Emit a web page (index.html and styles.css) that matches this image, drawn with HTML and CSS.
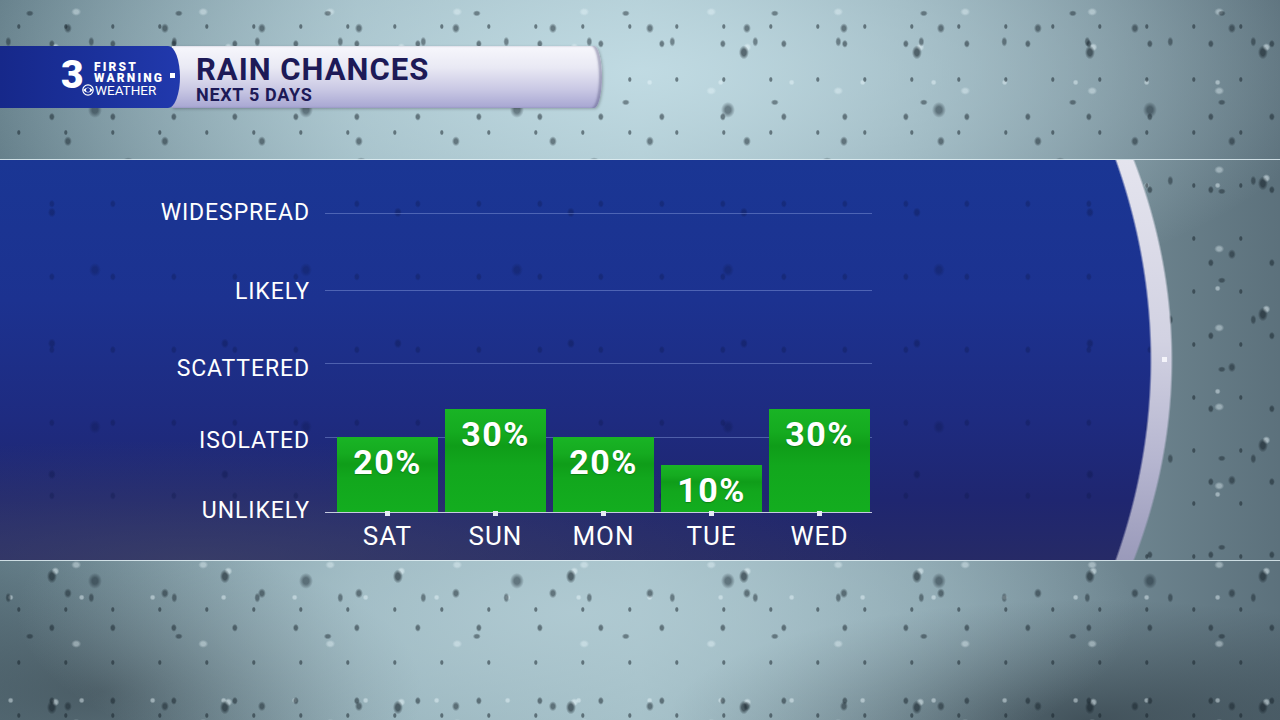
FILE: index.html
```html
<!DOCTYPE html>
<html lang="en">
<head>
<meta charset="utf-8">
<title>Rain Chances</title>
<link rel="stylesheet" href="styles.css">
</head>
<body>
<div class="screen">
  <header class="header">
    <div class="logo">
      <span class="logo-3">3</span>
      <div class="logo-words">
        <span class="lw-first">FIRST</span>
        <span class="lw-warning">WARNING</span>
        <span class="lw-weather"><svg class="eye" viewBox="-6 -6 12 12" width="12" height="12"><circle r="5.2" fill="none" stroke="#fff" stroke-width="1.2"/><path d="M-5 0 Q0 -5.2 5 0 Q0 5.2 -5 0 Z" fill="#fff"/><circle r="2.1" fill="#1c319c"/></svg>WEATHER</span>
      </div>
      <span class="logo-dot"></span>
    </div>
    <div class="titlebar">
      <div class="title">RAIN CHANCES</div>
      <div class="subtitle">NEXT 5 DAYS</div>
    </div>
  </header>

  <section class="panel">
    <span class="rim-dot"></span>
    <div class="chart">
      <div class="labels">
        <span class="level-label">WIDESPREAD</span>
        <span class="level-label">LIKELY</span>
        <span class="level-label">SCATTERED</span>
        <span class="level-label">ISOLATED</span>
        <span class="level-label">UNLIKELY</span>
      </div>
      <div class="lines">
        <span class="line"></span>
        <span class="line"></span>
        <span class="line"></span>
        <span class="line"></span>
        <span class="line baseline"></span>
      </div>
      <div class="bars">
        <div class="bar" style="height:75px">20%</div>
        <div class="bar" style="height:103px">30%</div>
        <div class="bar" style="height:75px">20%</div>
        <div class="bar" style="height:47px">10%</div>
        <div class="bar" style="height:103px">30%</div>
      </div>
      <div class="days">
        <div class="day"><span class="tick"></span><span class="day-label">SAT</span></div>
        <div class="day"><span class="tick"></span><span class="day-label">SUN</span></div>
        <div class="day"><span class="tick"></span><span class="day-label">MON</span></div>
        <div class="day"><span class="tick"></span><span class="day-label">TUE</span></div>
        <div class="day"><span class="tick"></span><span class="day-label">WED</span></div>
      </div>
    </div>
  </section>
</div>
</body>
</html>
```

FILE: styles.css
```css
* { box-sizing: border-box; }

html, body {
  margin: 0;
  width: 1280px;
  height: 720px;
  overflow: hidden;
}

body {
  font-family: Roboto, "Liberation Sans", sans-serif;
  color: #fff;
  background:
    /* rain drops: dark rims */
    radial-gradient(ellipse 5px 7px at 30% 40%, rgba(22,34,42,.6) 0 45%, transparent 100%) 0 0 / 173px 131px,
    radial-gradient(ellipse 4px 5px at 70% 25%, rgba(22,34,42,.5) 0 45%, transparent 100%) 0 0 / 97px 113px,
    radial-gradient(ellipse 7px 8px at 45% 70%, rgba(26,40,50,.5) 0 40%, transparent 100%) 0 0 / 211px 157px,
    radial-gradient(ellipse 3px 4px at 85% 60%, rgba(20,32,40,.5) 0 50%, transparent 100%) 0 0 / 61px 73px,
    radial-gradient(ellipse 4px 3px at 20% 15%, rgba(20,32,40,.45) 0 50%, transparent 100%) 0 0 / 149px 89px,
    radial-gradient(ellipse 6px 5px at 55% 85%, rgba(24,36,46,.5) 0 45%, transparent 100%) 0 0 / 233px 191px,
    radial-gradient(ellipse 2px 3px at 40% 50%, rgba(20,32,40,.5) 0 55%, transparent 100%) 0 0 / 47px 53px,
    radial-gradient(ellipse 3px 5px at 10% 30%, rgba(20,32,40,.45) 0 50%, transparent 100%) 0 0 / 83px 139px,
    /* rain drops: highlights */
    radial-gradient(ellipse 4px 4px at 32% 36%, rgba(235,248,252,.5) 0 45%, transparent 100%) 0 0 / 173px 131px,
    radial-gradient(ellipse 3px 3px at 15% 80%, rgba(235,248,252,.45) 0 45%, transparent 100%) 0 0 / 71px 103px,
    radial-gradient(ellipse 5px 4px at 60% 15%, rgba(235,248,252,.4) 0 45%, transparent 100%) 0 0 / 127px 79px,
    /* sky tones */
    radial-gradient(ellipse 700px 260px at 50% 10%, rgba(196,222,230,.9), transparent 100%),
    radial-gradient(ellipse 560px 190px at 45% 85%, rgba(178,204,212,.85), transparent 100%),
    radial-gradient(ellipse 420px 120px at 85% 100%, rgba(40,52,60,.65), transparent 100%),
    radial-gradient(ellipse 320px 150px at 8% 96%, rgba(48,60,68,.6), transparent 100%),
    linear-gradient(90deg, #647e89 0%, #93afb8 28%, #a0bcc4 50%, #859fa9 72%, #5c717c 100%);
}

.screen {
  display: flex;
  flex-direction: column;
  padding-top: 46px;
}

/* ---------- header ---------- */
.header {
  display: flex;
  height: 62px;
}

.logo {
  position: relative;
  z-index: 2;
  flex: 0 0 180px;
  display: flex;
  align-items: flex-start;
  padding: 11px 0 0 61px;
  background: linear-gradient(90deg, #16288a 0%, #1b319c 55%, #2139ad 100%);
  border-top-right-radius: 12px 31px;
  border-bottom-right-radius: 12px 31px;
}

.logo-3 {
  font-size: 39px;
  font-weight: 900;
  line-height: 36px;
  letter-spacing: -1px;
  width: 23px;
}

.logo-words {
  display: flex;
  flex-direction: column;
  margin-left: 10px;
  margin-top: 5px;
}

.lw-first,
.lw-warning {
  font-size: 12px;
  font-weight: 900;
  line-height: 10.5px;
  letter-spacing: 2.2px;
}

.lw-weather {
  display: flex;
  align-items: center;
  font-size: 13.5px;
  font-weight: 400;
  line-height: 12px;
  margin-top: 1px;
  margin-left: -12px;
}

.eye { margin-right: 1px; }

.logo-dot {
  position: absolute;
  left: 170px;
  top: 27px;
  width: 5px;
  height: 5px;
  background: #fff;
}

.titlebar {
  flex: 0 0 430px;
  margin-left: -8px;
  padding: 8px 0 0 24px;
  color: #1d1a57;
  background: linear-gradient(180deg, #f7f7fc 0%, #e9e9f4 35%, #c9c8e4 70%, #a7a6d2 100%);
  border-top-right-radius: 8px 31px;
  border-bottom-right-radius: 8px 31px;
  box-shadow: inset -3px 0 2px rgba(90, 90, 130, .45), 1px 1px 3px rgba(0, 0, 0, .25);
}

.title {
  font-size: 31px;
  font-weight: 700;
  line-height: 32px;
  letter-spacing: 1px;
}

.subtitle {
  font-size: 18px;
  font-weight: 700;
  line-height: 20px;
  letter-spacing: .7px;
  margin-top: -1px;
}

/* ---------- panel ---------- */
.panel {
  position: relative;
  margin-top: 51px;
  height: 402px;
  border-top: 1px solid rgba(225, 238, 243, .85);
  border-bottom: 1px solid rgba(225, 238, 243, .85);
}

.panel::before,
.panel::after {
  content: "";
  position: absolute;
  inset: 0;
  z-index: 0;
}

.panel::before {
  background: linear-gradient(180deg, #e4e4ee 0%, #d2d2e2 45%, #b6b6d0 75%, #9a9aba 100%);
  -webkit-mask-image: radial-gradient(ellipse 1173px 792px at 0% 50%, #000 99.8%, transparent 100%);
  mask-image: radial-gradient(ellipse 1173px 792px at 0% 50%, #000 99.8%, transparent 100%);
}

.panel::after {
  background:
    radial-gradient(ellipse 4px 5px at 30% 40%, rgba(10,20,70,.35) 0 45%, transparent 100%) 0 0 / 173px 131px,
    radial-gradient(ellipse 6px 7px at 45% 70%, rgba(10,20,70,.3) 0 40%, transparent 100%) 0 0 / 211px 157px,
    radial-gradient(ellipse 3px 4px at 85% 60%, rgba(10,20,70,.3) 0 50%, transparent 100%) 0 0 / 61px 73px,
    radial-gradient(ellipse 700px 120px at 15% 100%, rgba(70, 75, 105, .55), transparent 100%),
    linear-gradient(180deg, #1a3694 0%, #1c3290 35%, #1e2b80 65%, #1f2670 85%, #262a66 100%);
  -webkit-mask-image: radial-gradient(ellipse 1152px 817px at 0% 50%, #000 99.8%, transparent 100%);
  mask-image: radial-gradient(ellipse 1152px 817px at 0% 50%, #000 99.8%, transparent 100%);
}

.rim-dot {
  position: absolute;
  z-index: 2;
  left: 1162px;
  top: 197px;
  width: 5px;
  height: 5px;
  background: #f4f4fa;
}

.chart {
  position: relative;
  z-index: 1;
  display: grid;
  grid-template-columns: 325px 547px;
  grid-template-rows: 313px 48px;
  margin-top: 40px;
}

.labels {
  grid-column: 1;
  grid-row: 1;
  display: grid;
  grid-template-rows: 79px 76.5px 72.5px 70px 28px;
  width: 310px;
  margin-top: -1px;
}

.level-label {
  height: 28px;
  line-height: 28px;
  text-align: right;
  font-size: 23px;
  font-weight: 400;
  letter-spacing: .9px;
}

.lines {
  grid-column: 2;
  grid-row: 1;
  display: grid;
  grid-template-rows: 77px 73px 74px 75px 1px;
  padding-top: 13px;
}

.line {
  height: 1px;
  background: rgba(140, 160, 225, .45);
}

.line.baseline {
  background: rgba(225, 230, 245, .85);
}

.bars {
  grid-column: 2;
  grid-row: 1;
  display: flex;
  align-items: flex-end;
  gap: 7px;
  padding: 0 0 1px 12px;
}

.bar {
  width: 101px;
  padding-top: 7px;
  text-align: center;
  font-size: 34px;
  font-weight: 700;
  line-height: 36px;
  letter-spacing: 1.5px;
  background: linear-gradient(180deg, #19b425 0%, #15ab20 22%, #0f9d19 36%, #12a71d 55%, #13ad1f 100%);
  text-shadow: 0 1px 1px rgba(0, 60, 0, .35);
}

.days {
  grid-column: 2;
  grid-row: 2;
  display: flex;
  gap: 7px;
  padding-left: 12px;
}

.day {
  width: 101px;
  display: flex;
  flex-direction: column;
  align-items: center;
}

.tick {
  width: 5px;
  height: 5px;
  margin-top: -2px;
  background: #e6eaf4;
}

.day-label {
  margin-top: 6px;
  font-size: 26px;
  line-height: 28px;
  letter-spacing: 1px;
}
```
